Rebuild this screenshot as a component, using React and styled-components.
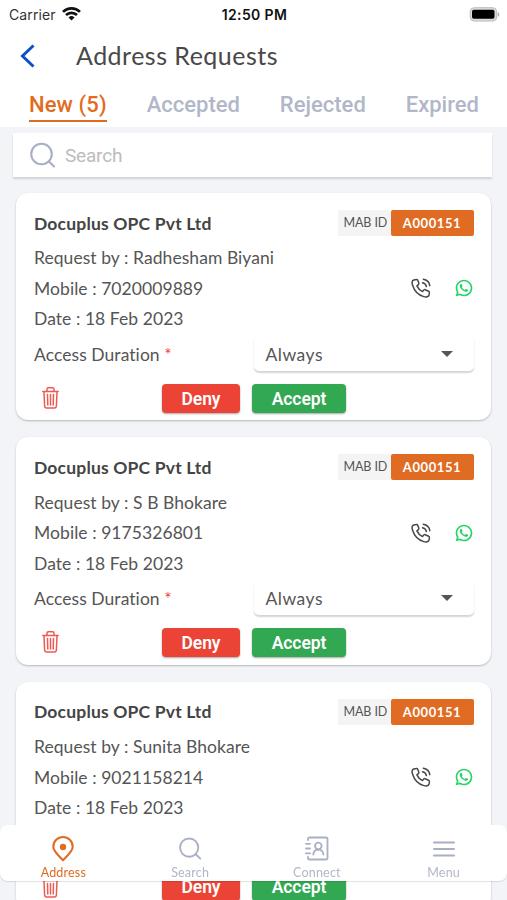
import styled, { createGlobalStyle } from "styled-components";
import { RiWhatsappLine } from "react-icons/ri";

const requests = [
  { id: 1, company: "Docuplus OPC Pvt Ltd", by: "Radhesham Biyani", mobile: "7020009889" },
  { id: 2, company: "Docuplus OPC Pvt Ltd", by: "S B Bhokare", mobile: "9175326801" },
  { id: 3, company: "Docuplus OPC Pvt Ltd", by: "Sunita Bhokare", mobile: "9021158214" },
];

const GlobalStyle = createGlobalStyle`
  * {
    box-sizing: border-box;
  }
  body {
    margin: 0;
    background: #f2f4f8;
    font-family: Lato, "Open Sans", sans-serif;
    color: #555;
  }
  svg {
    display: block;
    flex-shrink: 0;
  }
`;

const Screen = styled.div`
  height: 900px;
  overflow: hidden;
`;

const Top = styled.div`
  height: 127px;
  background: white;
`;

const StatusBar = styled.div`
  display: grid;
  grid-template-columns: 1fr auto 1fr;
  align-items: center;
  height: 28px;
  padding: 0 7px 0 9px;
  font-family: Inter, sans-serif;
  font-size: 14px;
  color: #333;
  > svg {
    justify-self: end;
  }
`;

const Carrier = styled.div`
  display: flex;
  align-items: center;
  gap: 6px;
  letter-spacing: 0.1px;
`;

const Time = styled.div`
  font-weight: 600;
  font-size: 14px;
  letter-spacing: 0.35px;
  color: #111;
`;

const Header = styled.div`
  display: flex;
  align-items: center;
  height: 56px;
  padding-left: 20px;
  gap: 41px;
`;

const Title = styled.h1`
  margin: 0;
  font-size: 25px;
  font-weight: 400;
  line-height: 28px;
  letter-spacing: 0.48px;
  transform: translateY(-1px);
  color: #484848;
`;

const Tabs = styled.div`
  display: flex;
  justify-content: space-between;
  padding: 5px 28px 0 29px;
`;

const Tab = styled.div`
  height: 33px;
  font-family: Roboto, sans-serif;
  font-size: 22px;
  font-weight: 500;
  line-height: 31px;
  letter-spacing: ${({ $active }) => ($active ? "0.1px" : "0")};
  color: ${({ $active }) => ($active ? "#e06c24" : "#b1b7c8")};
  border-bottom: 2px solid ${({ $active }) => ($active ? "#e06c24" : "transparent")};
`;

const SearchBox = styled.div`
  display: flex;
  align-items: center;
  gap: 9px;
  height: 44px;
  margin: 6px 15px 0 13px;
  padding-left: 17px;
  background: white;
  box-shadow: 0 2px 2px rgba(0, 0, 0, 0.14);
  font-family: Roboto, sans-serif;
  font-size: 19px;
  letter-spacing: -0.2px;
  color: #bcbcbe;
`;

const List = styled.div`
  display: flex;
  flex-direction: column;
  gap: 17px;
  padding: 16px 16px 16px 15.5px;
`;

const Card = styled.div`
  height: 227.4px;
  padding: 17px 17.5px 0 18.5px;
  background: white;
  border-radius: 12px;
  box-shadow: 0 1px 2px rgba(0, 0, 0, 0.25);
`;

const Row = styled.div`
  display: flex;
  align-items: center;
  justify-content: space-between;
  height: ${({ $height }) => $height || 30.5}px;
  margin-top: ${({ $top }) => $top || 0}px;
  font-size: 17.5px;
  letter-spacing: 0.06px;
  white-space: nowrap;
`;

const Company = styled.div`
  font-size: 17.5px;
  font-weight: 700;
  letter-spacing: 0.18px;
  color: #444;
`;

const Badge = styled.div`
  display: flex;
  height: 26px;
  line-height: 26px;
  font-size: 13px;
`;

const BadgeLabel = styled.div`
  width: 53px;
  padding-left: 6px;
  background: #f4f4f5;
  font-size: 12.5px;
  letter-spacing: -0.1px;
`;

const BadgeValue = styled.div`
  width: 83px;
  border-radius: 2px;
  background: #e06c24;
  color: white;
  font-weight: 700;
  letter-spacing: 0.6px;
  text-align: center;
`;

const Contacts = styled.div`
  display: flex;
  align-items: center;
  gap: 23px;
`;

const Required = styled.span`
  color: #ee4438;
`;

const Select = styled.div`
  display: flex;
  align-items: center;
  justify-content: space-between;
  width: 220px;
  height: 34px;
  padding: 0 20px 0 12px;
  border-radius: 5px;
  box-shadow: 0 1.5px 1.5px rgba(0, 0, 0, 0.17);
  letter-spacing: 0.5px;
`;

const Actions = styled.div`
  display: flex;
  align-items: center;
  height: 30px;
  margin-top: 11px;
  padding-left: 8px;
`;

const Button = styled.button`
  width: ${({ $width }) => $width}px;
  height: 29px;
  margin: 0 0 0 ${({ $gap }) => $gap}px;
  padding: 1px 0 0;
  border: 0;
  border-radius: 4px;
  background: ${({ $color }) => $color};
  box-shadow: 0 1px 2px rgba(0, 0, 0, 0.35);
  color: white;
  font-family: Roboto, sans-serif;
  font-size: 17.5px;
  font-weight: 600;
  letter-spacing: -0.1px;
`;

const BottomNav = styled.nav`
  position: fixed;
  left: 0;
  right: 0;
  top: 825px;
  display: grid;
  grid-template-columns: repeat(4, 1fr);
  height: 56px;
  background: white;
  border-radius: 8px;
  box-shadow: 0 1px 1px rgba(0, 0, 0, 0.12);
`;

const NavItem = styled.div`
  display: flex;
  flex-direction: column;
  align-items: center;
  padding-top: 10px;
  font-size: 12.5px;
  line-height: 16px;
  letter-spacing: 0.2px;
  color: ${({ $active }) => ($active ? "#e06c24" : "#b1b7c8")};
`;

const NavIcon = styled.div`
  display: flex;
  align-items: center;
  height: 27px;
  margin-bottom: 3px;
`;

const WifiIcon = () => (
  <svg width="19" height="14" viewBox="0 0 19 14" fill="none" stroke="#111" strokeWidth="2.7">
    <path d="M1 4.9a12.2 12.2 0 0 1 17 0M4 8.1a8 8 0 0 1 11 0" />
    <path d="M9.5 13.5 6.5 10.5a4.3 4.3 0 0 1 6 0z" fill="#111" stroke="none" />
  </svg>
);

const BatteryIcon = () => (
  <svg width="31" height="15" viewBox="0 0 31 15">
    <rect x="1.2" y=".7" width="26.5" height="13.3" rx="4" fill="#ddd" stroke="#bbb" />
    <rect x="3" y="2.8" width="22.5" height="9" rx="1.8" fill="#000" />
    <path d="M28.8 5c2 .8 2 4 0 4.800z" fill="#aaa" />
  </svg>
);

const BackIcon = () => (
  <svg width="15" height="24" viewBox="0 0 15 24" fill="none" stroke="#0b51c8" strokeWidth="3">
    <path d="M13.500 1.500 2.500 12l11 10.500" />
  </svg>
);

const SearchIcon = ({ size = 26 }) => (
  <svg width={size} height={size} viewBox="0 0 26 26" fill="none" stroke="#a9afc5" strokeWidth="2.1" strokeLinecap="round">
    <circle cx="11.500" cy="12" r="10.300" />
    <path d="m19 19.500 5 5" />
  </svg>
);

const PhoneIcon = () => (
  <svg width="20" height="20" viewBox="0 0 20 20" fill="none" stroke="#484848" strokeWidth="1.500" strokeLinecap="round" strokeLinejoin="round">
    <path d="M5.500 1.500 2.800 2C.8 2.500.8 4.800 1.500 7c1.700 5.600 5.600 10 11.300 11.600 2.500.7 4.700.4 5.300-1.900l.3-2c.1-.7-.2-1.200-.8-1.500l-3.400-1.500c-.6-.3-1.100-.1-1.500.4l-1.200 1.500C8.800 12.300 7 10.400 5.900 7.900l1.500-1.300c.5-.4.6-.9.400-1.500L6.700 2.200c-.2-.5-.6-.8-1.200-.7z" />
    <path d="M11.500 4.800c2.200.4 3.500 1.700 3.900 3.800M12.300 1.200c3.700.6 6 2.900 6.500 6.500" />
  </svg>
);

const TrashIcon = () => (
  <svg width="17" height="22" viewBox="0 0 17 22" fill="none" stroke="#ed5a52" strokeWidth="1.500" strokeLinecap="round">
    <path d="M.8 4.500h15.400M5 4.300V2.200C5 1.300 5.500.8 6.300.8h4.400c.8 0 1.300.5 1.300 1.400v2.100M2 4.700l.6 14.100c.1 1.500.8 2.300 2 2.300h7.800c1.200 0 1.900-.8 2-2.300L15 4.700" />
    <path d="m5.500 7.500.3 10.400M8.500 7.500v10.400M11.500 7.500l-.3 10.400" />
  </svg>
);

const PinIcon = () => (
  <svg width="24" height="27" viewBox="0 0 24 27" fill="none" stroke="#e06c24" strokeWidth="2.100">
    <path d="M12 25.200C8.400 21.300 2.300 16.400 2.300 11.700a9.700 9.700 0 0 1 19.400 0c0 4.700-6.100 9.600-9.700 13.500z" strokeLinejoin="round" />
    <circle cx="12" cy="12" r="3.200" fill="#e06c24" stroke="none" />
  </svg>
);

const ContactIcon = () => (
  <svg width="24" height="27" viewBox="0 0 24 27" fill="none" stroke="#a9afc5" strokeWidth="1.800" strokeLinecap="round">
    <path d="M3 5v-1c0-1 .6-1.500 1.500-1.500h16.300c1 0 1.700.6 1.700 1.600v18.800c0 1-.7 1.600-1.700 1.600H4.500C3.600 24.500 3 24 3 23v-1" />
    <path d="M1 8.800h4M1 13.500h4M1 18.300h4" />
    <circle cx="13.300" cy="11" r="3.300" />
    <path d="M8.300 19.500c.5-6.500 9.500-6.500 10 0" />
  </svg>
);

const MenuIcon = () => (
  <svg width="24" height="27" viewBox="0 0 24 27" stroke="#a9afc5" strokeWidth="2" strokeLinecap="round">
    <path d="M2 7.500h20M2 14h20M2 20.500h20" />
  </svg>
);

const CaretIcon = () => (
  <svg width="14" height="8" viewBox="0 0 14 8">
    <path d="M1 1h12L7 7z" fill="#555" />
  </svg>
);

const navItems = [
  { label: "Address", icon: <PinIcon />, active: true },
  { label: "Search", icon: <SearchIcon size={23} /> },
  { label: "Connect", icon: <ContactIcon /> },
  { label: "Menu", icon: <MenuIcon /> },
];

const RequestCard = ({ request }) => (
  <Card>
    <Row $height={26}>
      <Company>{request.company}</Company>
      <Badge>
        <BadgeLabel>MAB ID</BadgeLabel>
        <BadgeValue>A000151</BadgeValue>
      </Badge>
    </Row>
    <Row $top={6.5}>Request by : {request.by}</Row>
    <Row>
      <span>Mobile : {request.mobile}</span>
      <Contacts>
        <PhoneIcon />
        <RiWhatsappLine size={20} color="#25d366" />
      </Contacts>
    </Row>
    <Row>Date : 18 Feb 2023</Row>
    <Row $height={36} $top={2}>
      <span>
        Access Duration <Required>*</Required>
      </span>
      <Select>
        Always
        <CaretIcon />
      </Select>
    </Row>
    <Actions>
      <TrashIcon />
      <Button $width={78} $gap={103} $color="#eb4335">Deny</Button>
      <Button $width={94} $gap={12} $color="#32a852">Accept</Button>
    </Actions>
  </Card>
);

const App = () => (
  <Screen>
    <GlobalStyle />
    <Top>
      <StatusBar>
        <Carrier>
          Carrier
          <WifiIcon />
        </Carrier>
        <Time>12:50 PM</Time>
        <BatteryIcon />
      </StatusBar>
      <Header>
        <BackIcon />
        <Title>Address Requests</Title>
      </Header>
      <Tabs>
        <Tab $active>New (5)</Tab>
        <Tab>Accepted</Tab>
        <Tab>Rejected</Tab>
        <Tab>Expired</Tab>
      </Tabs>
    </Top>
    <SearchBox>
      <SearchIcon />
      Search
    </SearchBox>
    <List>
      {requests.map((request) => (
        <RequestCard key={request.id} request={request} />
      ))}
    </List>
    <BottomNav>
      {navItems.map((item) => (
        <NavItem key={item.label} $active={item.active}>
          <NavIcon>{item.icon}</NavIcon>
          {item.label}
        </NavItem>
      ))}
    </BottomNav>
  </Screen>
);

export default App;
